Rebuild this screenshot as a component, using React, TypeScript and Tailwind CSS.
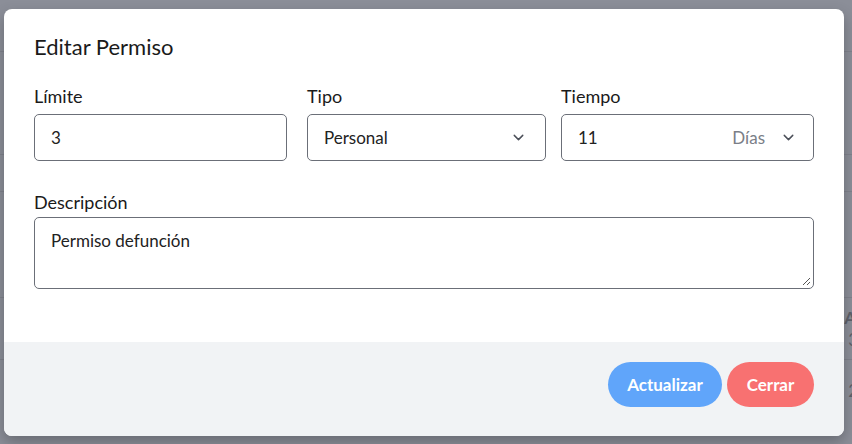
import React from 'react';
import { ChevronDown } from 'lucide-react';

const font = { fontFamily: 'Lato, "Open Sans", sans-serif' };

const Background: React.FC = () => (
  <div className="h-[444px] w-full bg-[#8b8e98] flex flex-col">
    <div className="h-[52px] border-b border-[#7f828c]" />
    <div className="h-[103px] border-b border-[#7f828c]" />
    <div className="h-[37px] border-b border-[#7f828c]" />
    <div className="h-[106px] border-b border-[#7f828c]" />
    <div className="h-[62px] border-b border-[#7f828c] flex flex-col items-end justify-center text-[#5e616a] leading-[22px] text-[17px]">
      <span className="font-bold -mr-[4px]">A</span>
      <span className="-mr-[6px]">3</span>
    </div>
    <div className="h-[62px] flex items-center justify-end text-[#5e616a] text-[17px]">
      <span className="-mr-[6px]">2</span>
    </div>
  </div>
);

const App: React.FC = () => {
  return (
    <div className="relative w-[852px] h-[444px] overflow-hidden" style={font}>
      <Background />

      {/* Modal */}
      <div className="absolute left-[4px] top-[9px] w-[840px] h-[427px] bg-white rounded-lg shadow-[0_6px_14px_rgba(0,0,0,0.25)] overflow-hidden flex flex-col">
        <div className="px-[30px] pt-[24px] h-[333px]">
          <h2 className="text-[22px] leading-[28px] text-[#1a1a1a]">Editar Permiso</h2>

          <div className="flex mt-[24px]">
            <div className="w-[253px]">
              <label className="block text-[18px] leading-[23px] text-[#1a1a1a] mb-[6px]">Límite</label>
              <div className="h-[47px] border border-[#6b6f78] rounded-[5px] flex items-center px-[16px] text-[17px] text-[#222]">3</div>
            </div>
            <div className="w-[239px] ml-[20px]">
              <label className="block text-[18px] leading-[23px] text-[#1a1a1a] mb-[6px]">Tipo</label>
              <div className="h-[47px] border border-[#6b6f78] rounded-[5px] flex items-center justify-between pl-[16px] pr-[18px] text-[17px] text-[#222]">
                <span>Personal</span>
                <ChevronDown size={17} strokeWidth={2} className="text-[#4b4f58]" />
              </div>
            </div>
            <div className="w-[253px] ml-[15px]">
              <label className="block text-[18px] leading-[23px] text-[#1a1a1a] mb-[6px]">Tiempo</label>
              <div className="h-[47px] border border-[#6b6f78] rounded-[5px] flex items-center pl-[16px] pr-[16px] text-[17px] text-[#222]">
                <span className="flex-1">11</span>
                <span className="text-[#7a7e87] mr-[15px]">Días</span>
                <ChevronDown size={17} strokeWidth={2} className="text-[#4b4f58]" />
              </div>
            </div>
          </div>

          <div className="mt-[30px]">
            <label className="block text-[18px] leading-[23px] text-[#1a1a1a] mb-[3px]">Descripción</label>
            <div className="relative h-[72px] border border-[#6b6f78] rounded-[5px] px-[16px] pt-[12px] text-[17px] leading-[22px] text-[#222]">
              Permiso defunción
              <svg className="absolute right-[2px] bottom-[2px]" width="10" height="10" viewBox="0 0 10 10">
                <path d="M9 2 L2 9 M9 6 L6 9" stroke="#555" strokeWidth="1" />
              </svg>
            </div>
          </div>
        </div>

        {/* Footer */}
        <div className="flex-1 bg-[#f1f3f5] flex items-start justify-end gap-[5px] pt-[20px] pr-[30px]">
          <button className="h-[45px] w-[114px] rounded-full bg-[#60a5fa] text-white font-bold text-[17px]">Actualizar</button>
          <button className="h-[45px] w-[87px] rounded-full bg-[#f87171] text-white font-bold text-[17px]">Cerrar</button>
        </div>
      </div>
    </div>
  );
};

export default App;
